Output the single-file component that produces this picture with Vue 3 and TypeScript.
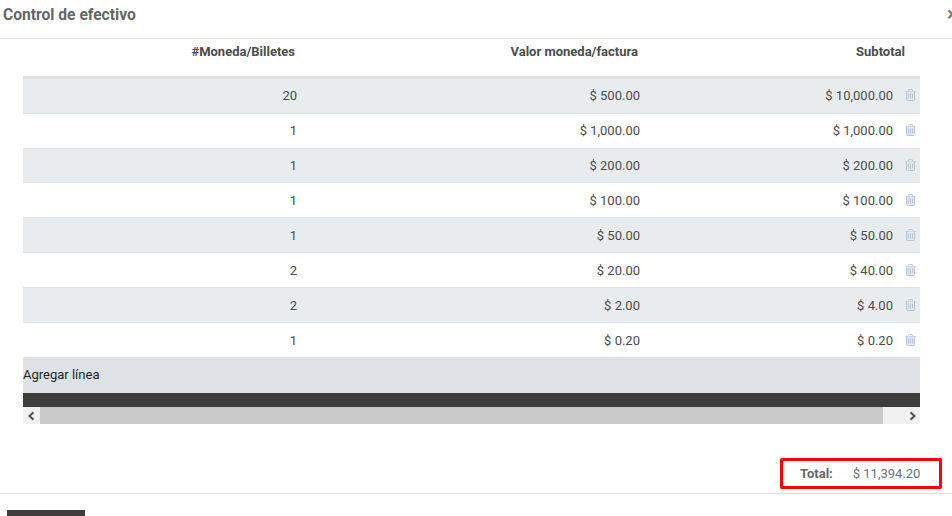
<script setup lang="ts">
interface Row { qty: string; value: string; subtotal: string }
const rows: Row[] = [
  { qty: '20', value: '$ 500.00', subtotal: '$ 10,000.00' },
  { qty: '1', value: '$ 1,000.00', subtotal: '$ 1,000.00' },
  { qty: '1', value: '$ 200.00', subtotal: '$ 200.00' },
  { qty: '1', value: '$ 100.00', subtotal: '$ 100.00' },
  { qty: '1', value: '$ 50.00', subtotal: '$ 50.00' },
  { qty: '2', value: '$ 20.00', subtotal: '$ 40.00' },
  { qty: '2', value: '$ 2.00', subtotal: '$ 4.00' },
  { qty: '1', value: '$ 0.20', subtotal: '$ 0.20' },
]
</script>

<template>
  <div class="modal">
    <header class="head">
      <h4>Control de efectivo</h4>
      <span class="close">×</span>
    </header>
    <div class="body">
      <div class="thead">
        <div class="c1">#Moneda/Billetes</div>
        <div class="c2">Valor moneda/factura</div>
        <div class="c3">Subtotal</div>
      </div>
      <div class="rule"></div>
      <div
        v-for="(r, i) in rows"
        :key="i"
        class="row"
        :class="{ odd: i % 2 === 0, short: i === 2, late: i > 2 }"
      >
        <div class="d1">{{ r.qty }}</div>
        <div class="d2">{{ r.value }}</div>
        <div class="d3">{{ r.subtotal }}</div>
        <svg class="trash" width="11" height="12" viewBox="0 0 11 12" fill="none" stroke="#b6c6da" stroke-width="1">
          <path d="M0.5 2.5H10.5M3.5 2.5V1.2Q3.5 0.5 4.2 0.5H6.8Q7.5 0.5 7.5 1.2V2.5" />
          <path d="M1.5 2.5V10.5Q1.5 11.5 2.5 11.5H8.5Q9.5 11.5 9.5 10.5V2.5" fill="#e2e8ef" />
          <path d="M3.5 4.5V9.5M5.5 4.5V9.5M7.5 4.5V9.5" />
        </svg>
      </div>
      <div class="add">Agregar línea</div>
      <div class="dark"></div>
      <div class="scroll">
        <span class="arrow">
          <svg width="9" height="10" viewBox="0 0 9 10" fill="none" stroke="#505050" stroke-width="2"><path d="M6.5 1.2L2.5 5L6.5 8.8" /></svg>
        </span>
        <span class="track"></span>
        <span class="arrow end">
          <svg width="9" height="10" viewBox="0 0 9 10" fill="none" stroke="#505050" stroke-width="2"><path d="M2.5 1.2L6.5 5L2.5 8.8" /></svg>
        </span>
      </div>
      <div class="total-wrap">
        <div class="total">
          <strong>Total:</strong>
          <span>$ 11,394.20</span>
        </div>
      </div>
    </div>
    <footer class="foot">
      <div class="btn"></div>
    </footer>
  </div>
</template>

<style>
html, body { margin: 0; height: 100%; overflow: hidden; background: #fff; }
</style>

<style scoped>
.modal {
  width: 952px;
  height: 516px;
  overflow: hidden;
  font-family: Roboto, "Liberation Sans", sans-serif;
  font-size: 13px;
  color: #4c4c4c;
  background: #fff;
}
.head {
  height: 38px;
  border-bottom: 1px solid #dee2e6;
  display: flex;
  justify-content: space-between;
  box-sizing: content-box;
}
.head h4 {
  margin: 0;
  padding: 6px 0 0 3px;
  font-size: 15.6px;
  line-height: 18px;
  font-weight: 700;
  color: #666;
}
.close {
  font-size: 20px;
  line-height: 28px;
  font-weight: 700;
  color: #777;
  margin-right: -3px;
  width: 8px;
  overflow: hidden;
}
.body { padding: 0 32px 0 23px; }
.thead {
  height: 37px;
  display: flex;
  font-weight: 700;
  color: #4c4c4c;
  line-height: 26px;
}
.c1, .c2, .c3 { text-align: right; }
.c1 { width: 272px; }
.c2 { width: 343px; }
.c3 { width: 267px; }
.rule { height: 3px; background: #dee2e6; }
.row {
  height: 35px;
  box-sizing: border-box;
  border-bottom: 1px solid #dee2e6;
  display: flex;
  align-items: flex-start;
  line-height: 34px;
}
.row.short { height: 34px; }
.row.late { padding-top: 1px; }
.row.odd { background: #e9ecef; }
.d1, .d2, .d3 { text-align: right; height: 33px; }
.d1 { width: 274px; }
.d2 { width: 343px; }
.d3 { width: 253px; }
.trash { margin: 10px 0 0 12px; }
.add {
  height: 35px;
  line-height: 33px;
  background: #dee2e6;
  color: #212529;
}
.dark { height: 14px; background: #3e3d3b; }
.scroll { height: 17px; display: flex; background: #f1f1f1; }
.arrow { width: 17px; display: flex; align-items: center; justify-content: center; }
.arrow.end { width: 37px; justify-content: flex-end; padding-right: 3px; box-sizing: border-box; }
.track { flex: 1; background: #c9c9c9; }
.total-wrap { display: flex; justify-content: flex-end; margin: 34px -22px 0 0; }
.total {
  width: 162px;
  height: 31px;
  box-sizing: border-box;
  border: 3px solid #f00;
  border-radius: 2px;
  display: flex;
  align-items: center;
  padding-left: 17px;
  gap: 20px;
  color: #6b7280;
}
.total strong { color: #666; }
.foot {
  margin-top: 4px;
  border-top: 1px solid #dee2e6;
  padding: 16px 0 0 7px;
}
.btn { width: 78px; height: 20px; background: #3e3d3b; }
</style>
